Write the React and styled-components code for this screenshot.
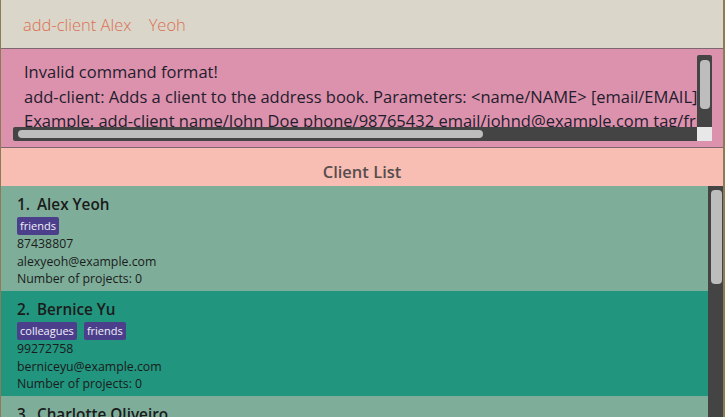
import React from "react";
import styled, { createGlobalStyle } from "styled-components";

const GlobalStyle = createGlobalStyle`
  html, body {
    margin: 0;
    padding: 0;
    background: #8d7b56;
  }
  body {
    font-family: "Open Sans", "Noto Sans", sans-serif;
  }
`;

const Window = styled.div`
  display: flex;
  flex-direction: column;
  height: 417px;
  width: 725px;
  box-sizing: border-box;
  border-left: 1px solid #8d7b56;
  border-right: 2px solid #8d7b56;
  overflow: hidden;
`;

const CommandBox = styled.div`
  height: 48px;
  flex: none;
  background: #dad6c9;
  border-bottom: 1px solid #7e6870;
  display: flex;
  align-items: center;
  padding-left: 22px;
  font-size: 16.5px;
  font-weight: 300;
  color: #dc6f55;
  white-space: pre;
`;

const ResultPane = styled.div`
  height: 99px;
  flex: none;
  box-sizing: border-box;
  background: #dc91ac;
  border-bottom: 1px solid #7e6870;
  padding: 6px 11px 6px 12px;
`;

const ScrollGrid = styled.div`
  display: grid;
  grid-template-columns: 1fr 15px;
  grid-template-rows: 1fr 14px;
  height: 100%;
`;

const Viewport = styled.div`
  overflow: hidden;
  padding: 5px 0 0 11px;
  font-size: 16.5px;
  line-height: 24.5px;
  color: #1f1d2e;
  white-space: pre;
`;

const VBar = styled.div`
  background: #444444;
  border-radius: 2px 2px 0 0;
  padding: 5px 2px 0 3px;
`;

const VThumb = styled.div`
  height: 49px;
  background: #bdbdbd;
  border-radius: 4px;
`;

const HBar = styled.div`
  background: #444444;
  border-radius: 2px 0 0 2px;
  padding: 3px 0 3px 5px;
`;

const HThumb = styled.div`
  height: 100%;
  width: 465px;
  background: #bdbdbd;
  border-radius: 4px;
`;

const Corner = styled.div`
  background: #e8e8e8;
`;

const ListHeader = styled.div`
  height: 38px;
  flex: none;
  background: #f8beb3;
  display: flex;
  align-items: center;
  justify-content: center;
  font-size: 16.5px;
  font-weight: 600;
  color: #574d4d;
  padding-top: 9px;
  box-sizing: border-box;
`;

const ListArea = styled.div`
  flex: 1;
  display: flex;
  min-height: 0;
`;

const Cards = styled.div`
  flex: 1;
  overflow: hidden;
`;

const Card = styled.div`
  height: 105px;
  box-sizing: border-box;
  padding: 8px 16px 0;
  background: ${({ $alt }) => ($alt ? "#21957e" : "#7eae9a")};
  color: #1b1b1b;
`;

const Title = styled.div`
  font-size: 15.3px;
  font-weight: 600;
  line-height: 21px;
  display: flex;
  gap: 7px;
`;

const Tags = styled.div`
  display: flex;
  gap: 7px;
  margin-top: 2px;
`;

const Tag = styled.span`
  background: #4b3f8c;
  color: #f2f0f8;
  font-size: 11px;
  line-height: 18px;
  padding: 0 3px;
  border-radius: 2px;
`;

const Detail = styled.div`
  font-size: 12.3px;
  line-height: 17.5px;
`;

const ScrollTrack = styled.div`
  width: 15px;
  flex: none;
  background: #444444;
  padding: 4px 1px 0 3px;
  box-sizing: border-box;
`;

const ScrollThumb = styled.div`
  height: 94px;
  background: #bdbdbd;
  border-radius: 4px;
`;

const clients = [
  {
    name: "Alex Yeoh",
    tags: ["friends"],
    phone: "87438807",
    email: "alexyeoh@example.com",
    projects: 0,
  },
  {
    name: "Bernice Yu",
    tags: ["colleagues", "friends"],
    phone: "99272758",
    email: "berniceyu@example.com",
    projects: 0,
  },
  {
    name: "Charlotte Oliveiro",
    tags: ["neighbours"],
    phone: "93210283",
    email: "charlotte@example.com",
    projects: 0,
  },
];

const resultLines = [
  "Invalid command format!",
  "add-client: Adds a client to the address book. Parameters: <name/NAME> [email/EMAIL] [phone/PHONE] [tag/TAG]...",
  "Example: add-client name/John Doe phone/98765432 email/johnd@example.com tag/friends tag/owesMoney",
];

export default function App() {
  return (
    <>
      <GlobalStyle />
      <Window>
        <CommandBox>{"add-client Alex    Yeoh"}</CommandBox>
        <ResultPane>
          <ScrollGrid>
            <Viewport>{resultLines.join("\n")}</Viewport>
            <VBar>
              <VThumb />
            </VBar>
            <HBar>
              <HThumb />
            </HBar>
            <Corner />
          </ScrollGrid>
        </ResultPane>
        <ListHeader>Client List</ListHeader>
        <ListArea>
          <Cards>
            {clients.map((c, i) => (
              <Card key={c.name} $alt={i % 2 === 1}>
                <Title>
                  <span>{i + 1}.</span>
                  <span>{c.name}</span>
                </Title>
                <Tags>
                  {c.tags.map((t) => (
                    <Tag key={t}>{t}</Tag>
                  ))}
                </Tags>
                <Detail>{c.phone}</Detail>
                <Detail>{c.email}</Detail>
                <Detail>Number of projects: {c.projects}</Detail>
              </Card>
            ))}
          </Cards>
          <ScrollTrack>
            <ScrollThumb />
          </ScrollTrack>
        </ListArea>
      </Window>
    </>
  );
}
